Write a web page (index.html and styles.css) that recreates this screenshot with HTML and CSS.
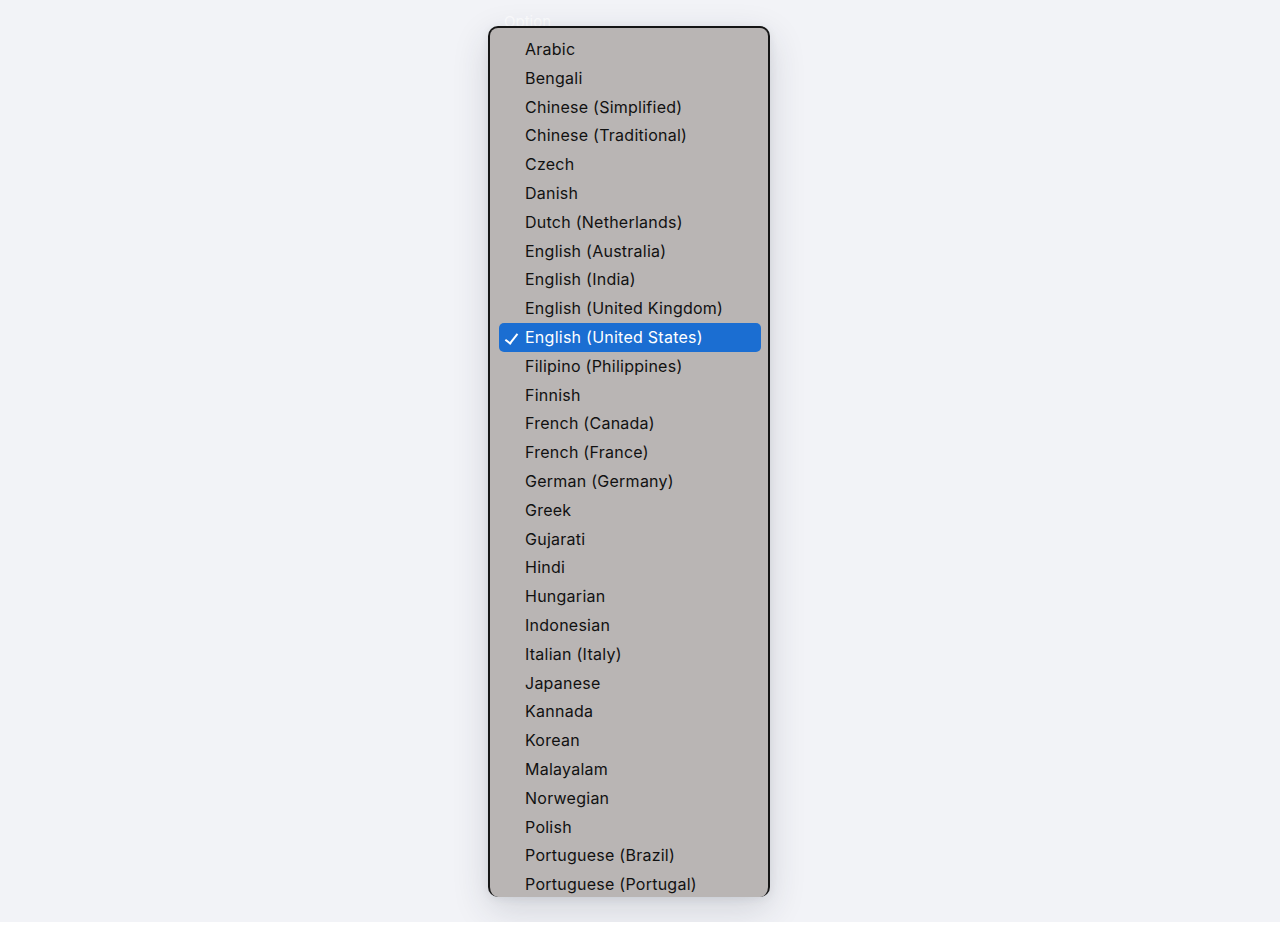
FILE: index.html
```html
<!DOCTYPE html>
<html lang="en">
    <head>
        <meta charset="UTF-8">
        <title>Language</title>
        <link rel="stylesheet" href="styles.css">
    </head>
    <body>
        <div class="page">
            <div class="picker">
                <span class="picker-label">Option</span>
                <ul class="menu">
                    <li>Arabic</li>
                    <li>Bengali</li>
                    <li>Chinese (Simplified)</li>
                    <li>Chinese (Traditional)</li>
                    <li>Czech</li>
                    <li>Danish</li>
                    <li>Dutch (Netherlands)</li>
                    <li>English (Australia)</li>
                    <li>English (India)</li>
                    <li>English (United Kingdom)</li>
                    <li class="selected">English (United States)</li>
                    <li>Filipino (Philippines)</li>
                    <li>Finnish</li>
                    <li>French (Canada)</li>
                    <li>French (France)</li>
                    <li>German (Germany)</li>
                    <li>Greek</li>
                    <li>Gujarati</li>
                    <li>Hindi</li>
                    <li>Hungarian</li>
                    <li>Indonesian</li>
                    <li>Italian (Italy)</li>
                    <li>Japanese</li>
                    <li>Kannada</li>
                    <li>Korean</li>
                    <li>Malayalam</li>
                    <li>Norwegian</li>
                    <li>Polish</li>
                    <li>Portuguese (Brazil)</li>
                    <li>Portuguese (Portugal)</li>
                </ul>
            </div>
        </div>
    </body>
</html>
```

FILE: styles.css
```css
body {
    margin: 0;
    background: #fff;
    font-family: 'Inter', 'Liberation Sans', sans-serif;
}
.page {
    height: 922px;
    background: #f2f3f7;
    display: flex;
    justify-content: center;
    overflow: hidden;
}
.picker {
    position: relative;
    width: 282px;
    margin-left: -22px;
    padding-top: 26px;
}
.picker-label {
    position: absolute;
    top: 12px;
    left: 16px;
    font-size: 15px;
    color: #fff;
    opacity: 0.8;
}
.menu {
    position: relative;
    list-style: none;
    margin: 0;
    padding: 7px 7px 0 9px;
    height: 862px;
    overflow: hidden;
    background: #b9b5b4;
    border: 2px solid #151515;
    border-bottom: none;
    border-radius: 10px;
    box-shadow: 0 12px 36px rgba(40, 45, 60, 0.16), 0 2px 8px rgba(40, 45, 60, 0.08);
}
.menu li {
    position: relative;
    height: 28.8px;
    line-height: 28.8px;
    padding-left: 26px;
    font-size: 16px;
    letter-spacing: 0.25px;
    color: #111;
    border-radius: 5px;
    white-space: nowrap;
}
.menu li.selected {
    background: #1b6ed2;
    color: #fff;
}
.menu li.selected::before {
    content: "";
    position: absolute;
    left: 9px;
    top: 8px;
    width: 5px;
    height: 11px;
    border: solid #fff;
    border-width: 0 2.5px 2.5px 0;
    transform: rotate(38deg);
}
```
